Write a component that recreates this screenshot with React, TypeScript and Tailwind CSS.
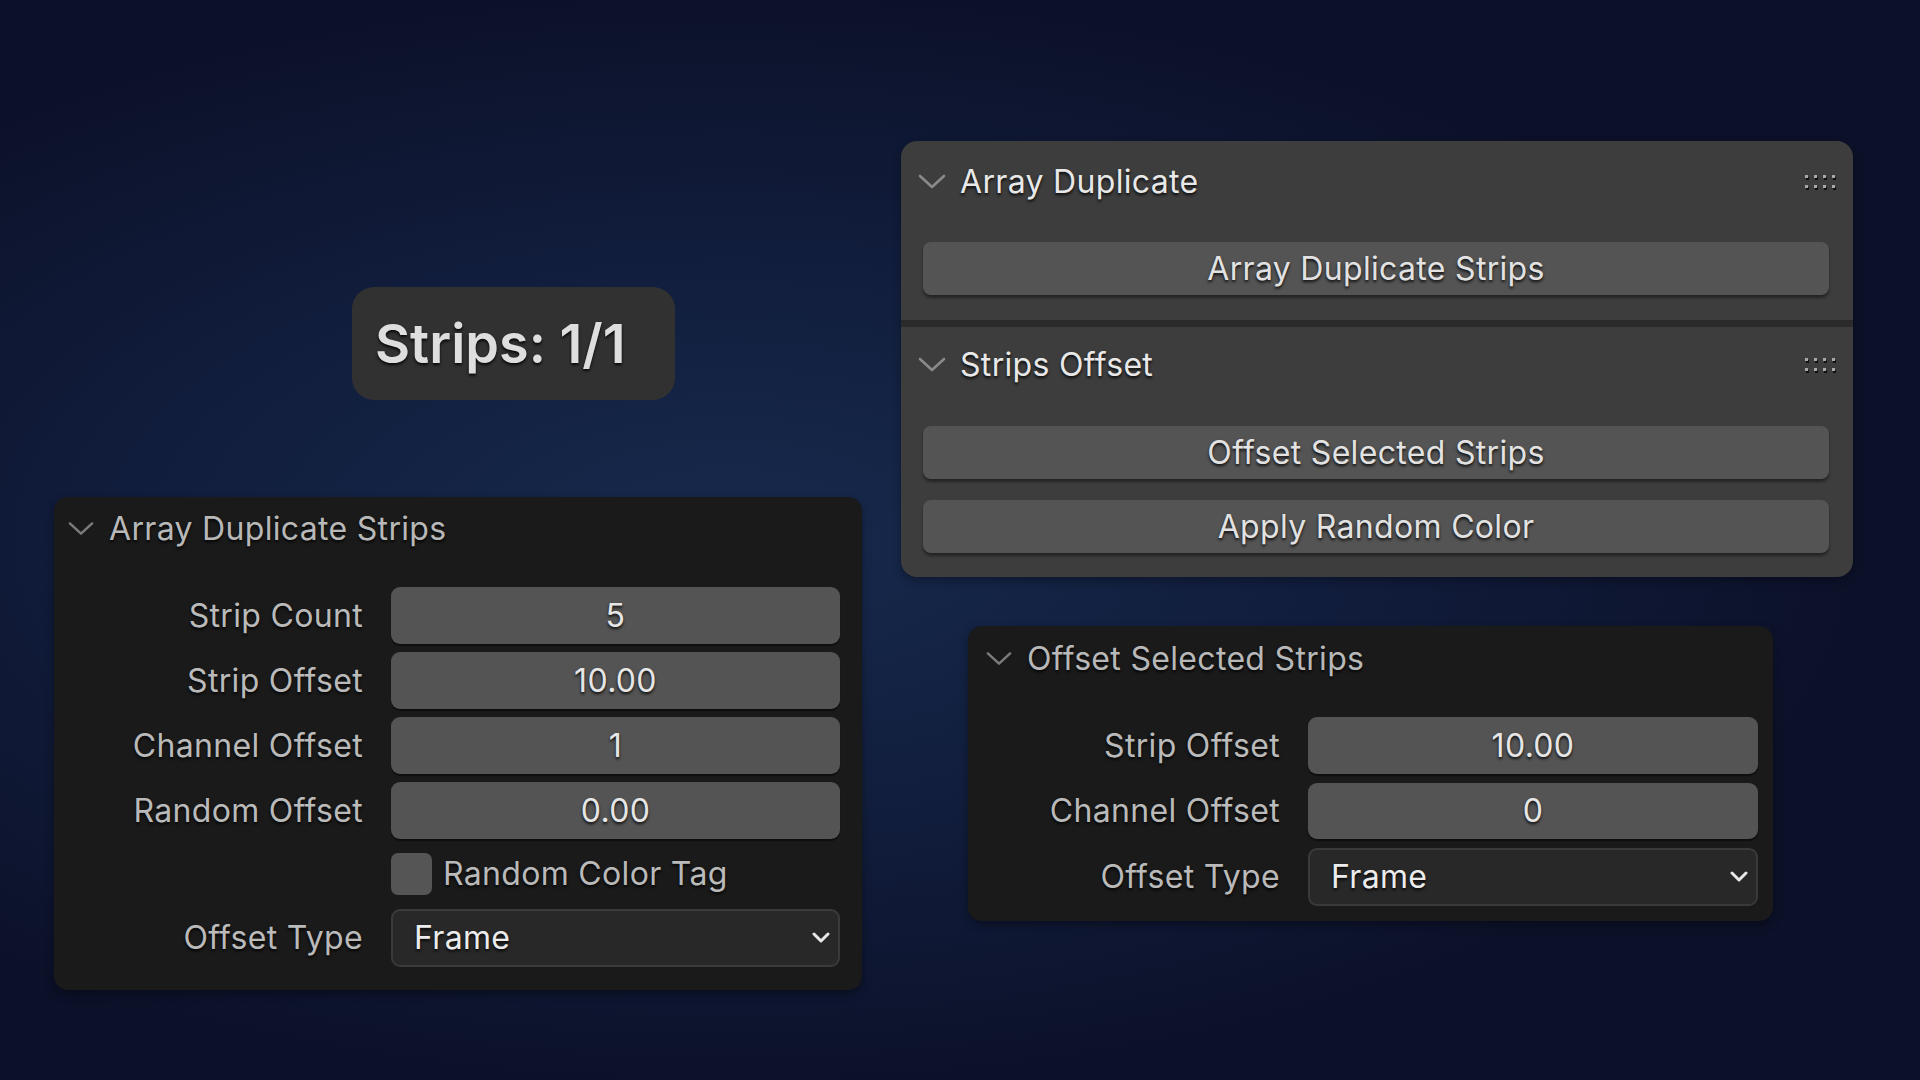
const font = "font-['Inter','Noto_Sans',sans-serif]";
const shadow = "[text-shadow:0_2px_3px_rgba(0,0,0,0.85)]";
const txt = "text-[32px] tracking-[0.01em]";

const Chevron = ({ color = "#8a8a8a", w = 28 }: { color?: string; w?: number }) => (
  <svg width={w} height={16} viewBox="0 0 28 16" fill="none">
    <polyline
      points="2,2 14,13 26,2"
      stroke={color}
      strokeWidth={2.6}
      strokeLinecap="round"
      strokeLinejoin="round"
    />
  </svg>
);

const Grip = () => (
  <svg width={34} height={16} viewBox="0 0 34 16">
    {[0, 1].map((r) =>
      [0, 1, 2, 3].map((c) => (
        <g key={`${r}-${c}`}>
          <rect x={c * 9 + 1} y={r * 10 + 3} width={3} height={3} fill="#111" />
          <rect x={c * 9} y={r * 10 + 1} width={3} height={3} fill="#a8a8a8" />
        </g>
      ))
    )}
  </svg>
);

const SelectArrow = () => (
  <svg width={22} height={12} viewBox="0 0 22 12" fill="none">
    <polyline
      points="4,2 11,9 18,2"
      stroke="#e8e8e8"
      strokeWidth={3}
      strokeLinecap="round"
      strokeLinejoin="round"
    />
  </svg>
);

const NumberField = ({ value }: { value: string }) => (
  <div
    className={`h-full w-full rounded-[9px] bg-[#545454] shadow-[0_2px_1px_rgba(0,0,0,0.45)] flex items-center justify-center ${txt} text-[#e6e6e6] ${shadow}`}
  >
    {value}
  </div>
);

const Dropdown = ({ value }: { value: string }) => (
  <div
    className={`h-full w-full rounded-[9px] bg-[#282828] border-2 border-[#3a3a3a] flex items-center justify-between pl-[21px] pr-[6px] ${txt} text-[#ececec] ${shadow}`}
  >
    <span>{value}</span>
    <SelectArrow />
  </div>
);

const Row = ({
  label,
  labelW,
  children,
  h = "h-[57px]",
}: {
  label?: string;
  labelW: string;
  children: React.ReactNode;
  h?: string;
}) => (
  <div className={`flex items-center ${h}`}>
    <div className={`${labelW} shrink-0 pr-[28px] text-right ${txt} text-[#bababa] ${shadow}`}>
      {label}
    </div>
    <div className="flex-1 h-full flex items-center">{children}</div>
  </div>
);

const TopPanelButton = ({ label }: { label: string }) => (
  <div
    className={`h-[53px] rounded-[8px] bg-[#545454] shadow-[0_3px_3px_rgba(0,0,0,0.4)] flex items-center justify-center ${txt} text-[#e2e2e2] ${shadow}`}
  >
    {label}
  </div>
);

const SectionHeader = ({ title }: { title: string }) => (
  <div className="flex items-center h-[82px] pl-[17px] pr-[12px]">
    <Chevron />
    <span className={`ml-[14px] ${txt} text-[#e8e8e8] ${shadow}`}>{title}</span>
    <div className="ml-auto">
      <Grip />
    </div>
  </div>
);

export default function App() {
  return (
    <div
      className={`${font} w-[1920px] h-[1080px] overflow-hidden flex bg-[radial-gradient(ellipse_70%_60%_at_38%_50%,#172a4d_0%,#111d3c_45%,#0c1129_85%)]`}
    >
      {/* Left column */}
      <div className="pl-[54px] flex flex-col">
        <div
          className={`mt-[287px] ml-[298px] w-[323px] h-[113px] rounded-[22px] bg-[#313131] flex items-center pl-[23px] text-[54px] font-semibold text-[#dedede] ${shadow}`}
        >
          Strips: 1/1
        </div>

        <div className="mt-[97px] w-[808px] h-[493px] rounded-[14px] bg-[#1a1a1a] shadow-[0_4px_10px_rgba(0,0,0,0.35)] pr-[22px]">
          <div className="flex items-center h-[64px] pl-[14px]">
            <Chevron color="#7c7c7c" w={26} />
            <span className={`ml-[15px] ${txt} text-[#b8b8b8] ${shadow}`}>
              Array Duplicate Strips
            </span>
          </div>
          <div className="mt-[26px] flex flex-col gap-[8px]">
            <Row label="Strip Count" labelW="w-[337px]">
              <NumberField value="5" />
            </Row>
            <Row label="Strip Offset" labelW="w-[337px]">
              <NumberField value="10.00" />
            </Row>
            <Row label="Channel Offset" labelW="w-[337px]">
              <NumberField value="1" />
            </Row>
            <Row label="Random Offset" labelW="w-[337px]">
              <NumberField value="0.00" />
            </Row>
            <Row labelW="w-[337px]" h="h-[54px]">
              <div className="w-[41px] h-[42px] rounded-[7px] bg-[#555555]" />
              <span className={`ml-[11px] ${txt} text-[#bababa] ${shadow}`}>
                Random Color Tag
              </span>
            </Row>
            <Row label="Offset Type" labelW="w-[337px]" h="h-[58px]">
              <Dropdown value="Frame" />
            </Row>
          </div>
        </div>
      </div>

      {/* Right column */}
      <div className="ml-[39px] flex flex-col">
        <div className="mt-[141px] w-[952px] h-[436px] rounded-[16px] bg-[#3d3d3d] overflow-hidden flex flex-col shadow-[0_4px_10px_rgba(0,0,0,0.3)]">
          <div className="h-[179px] px-[22px] pr-[24px]">
            <div className="-mx-[22px]">
              <SectionHeader title="Array Duplicate" />
            </div>
            <div className="mt-[19px]">
              <TopPanelButton label="Array Duplicate Strips" />
            </div>
          </div>
          <div className="h-[7px] bg-[#2b2b2b]" />
          <div className="flex-1 px-[22px] pr-[24px]">
            <div className="-mx-[22px] h-[80px]">
              <div className="-mt-[3px]">
                <SectionHeader title="Strips Offset" />
              </div>
            </div>
            <div className="mt-[22px] flex flex-col gap-[21px]">
              <TopPanelButton label="Offset Selected Strips" />
              <TopPanelButton label="Apply Random Color" />
            </div>
          </div>
        </div>

        <div className="mt-[49px] ml-[67px] w-[805px] h-[295px] rounded-[14px] bg-[#1a1a1a] shadow-[0_4px_10px_rgba(0,0,0,0.35)] pr-[15px]">
          <div className="flex items-center h-[66px] pl-[18px]">
            <Chevron color="#7c7c7c" w={26} />
            <span className={`ml-[15px] ${txt} text-[#b8b8b8] ${shadow}`}>
              Offset Selected Strips
            </span>
          </div>
          <div className="mt-[25px] flex flex-col gap-[9px]">
            <Row label="Strip Offset" labelW="w-[340px]">
              <NumberField value="10.00" />
            </Row>
            <Row label="Channel Offset" labelW="w-[340px]" h="h-[56px]">
              <NumberField value="0" />
            </Row>
            <Row label="Offset Type" labelW="w-[340px]" h="h-[58px]">
              <Dropdown value="Frame" />
            </Row>
          </div>
        </div>
      </div>
    </div>
  );
}
